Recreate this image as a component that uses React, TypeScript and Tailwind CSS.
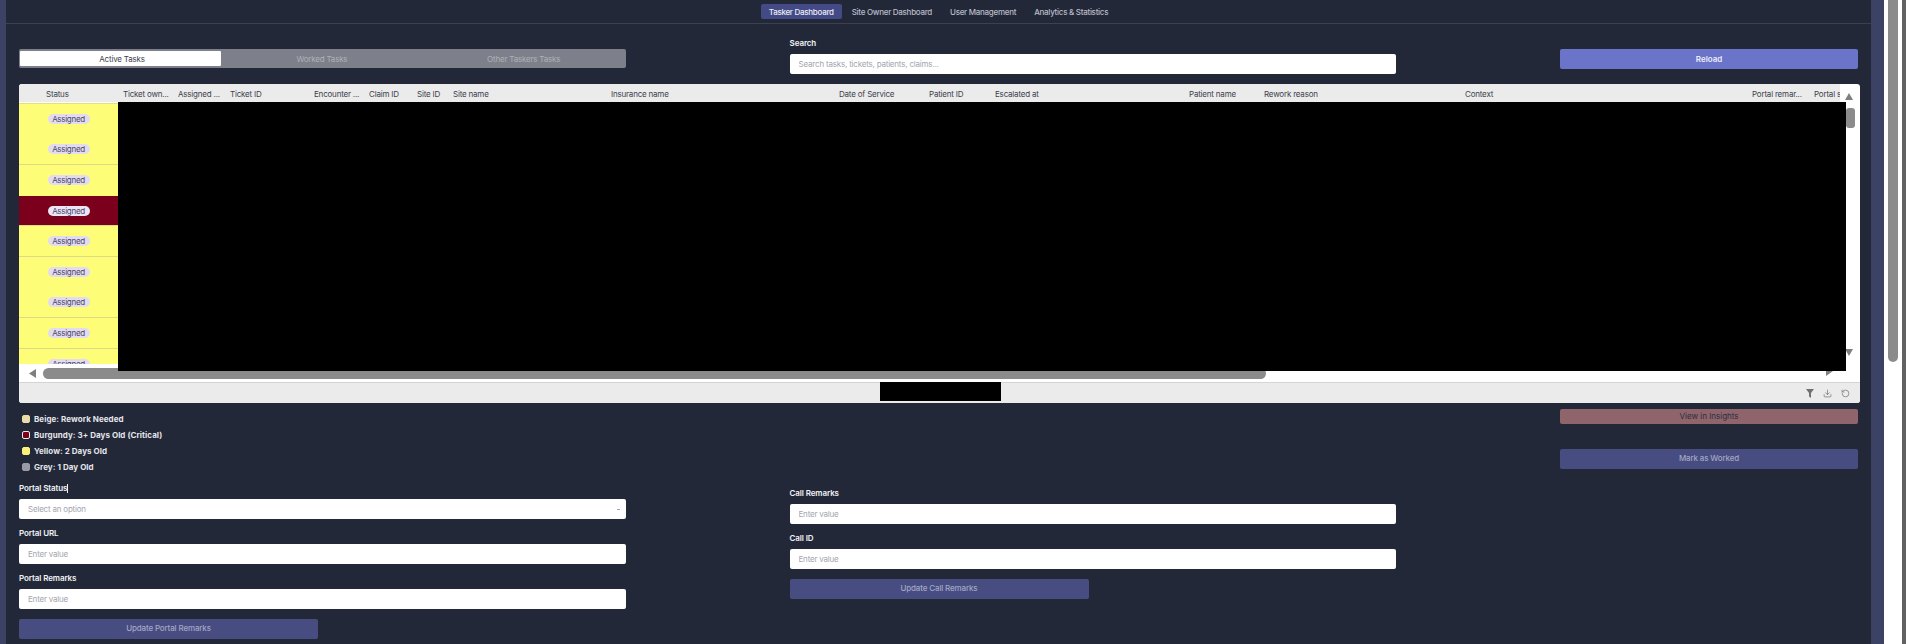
import { Download, RotateCcw } from 'lucide-react';

const navItems = ['Tasker Dashboard', 'Site Owner Dashboard', 'User Management', 'Analytics & Statistics'];

const columns = [
  'Ticket own...',
  'Assigned ...',
  'Ticket ID',
  'Encounter ...',
  'Claim ID',
  'Site ID',
  'Site name',
  'Insurance name',
  'Date of Service',
  'Patient ID',
  'Escalated at',
  'Patient name',
  'Rework reason',
  'Context',
  'Portal remar...',
  'Portal status',
];

// bottom line on a row, burgundy is the overdue one
const rows = [
  { line: false, critical: false },
  { line: true, critical: false },
  { line: false, critical: false },
  { line: true, critical: true },
  { line: true, critical: false },
  { line: false, critical: false },
  { line: true, critical: false },
  { line: true, critical: false },
  { line: false, critical: false },
];

const legend = [
  { label: 'Beige: Rework Needed', color: 'bg-[#e9dca6] border-[#e9dca6]' },
  { label: 'Burgundy: 3+ Days Old (Critical)', color: 'bg-[#7a001c] border-[#f0e8e8]' },
  { label: 'Yellow: 2 Days Old', color: 'bg-[#fdf07a] border-[#fdf07a]' },
  { label: 'Grey: 1 Day Old', color: 'bg-[#9a9aa6] border-[#9a9aa6]' },
];

function Field({ label, last }: { label: string; last?: boolean }) {
  return (
    <div className={last ? 'flex flex-col' : 'mb-[9px] flex flex-col'}>
      <label className="mb-[6px] h-[10px] text-[8px] leading-[10px] font-semibold tracking-[-0.1px] text-[#f2f3f7]">
        {label}
      </label>
      <input
        readOnly
        placeholder="Enter value"
        className="h-[20px] w-full rounded-[2px] bg-white px-[9px] text-[8px] tracking-[-0.2px] text-[#3a3f50] outline-none placeholder:text-[#a3a5ad]"
      />
    </div>
  );
}

function DimButton({ label, className }: { label: string; className: string }) {
  return (
    <button
      className={`flex h-[20px] items-center justify-center rounded-[2px] bg-[#474d80] pb-[3px] text-[8px] font-medium tracking-[-0.15px] text-[#a3a6c6] ${className}`}
    >
      {label}
    </button>
  );
}

function StatusTable() {
  return (
    <div className="relative flex h-[319px] w-[1841px] flex-col overflow-hidden rounded-[3px] bg-white">
      <div className="flex h-[19px] w-full">
        <div className="grid h-[18px] w-[1821px] shrink-0 grid-cols-[99px_55px_52px_84px_55px_48px_36px_158px_228px_90px_66px_194px_75px_201px_287px_62px_31px] items-center overflow-hidden bg-[#ebebeb] pt-[1px] text-[8px] tracking-[-0.2px] text-[#3b3f4c]">
          <div className="pl-[27px]">Status</div>
          {columns.map((c) => (
            <div key={c} className="overflow-hidden pl-[5px] whitespace-nowrap">
              {c}
            </div>
          ))}
        </div>
      </div>

      <div className="h-[261px] w-[99px] overflow-hidden border-t border-[#e6dc80]">
        {rows.map((r, i) => (
          <div
            key={i}
            className={`flex h-[30.6px] items-center justify-center ${r.critical ? 'bg-[#7a001c]' : 'bg-[#fdfd78]'} ${
              r.line ? 'border-b border-[#dfd98a]' : ''
            }`}
          >
            <span
              className={`flex h-[10px] w-[42px] items-center justify-center rounded-full text-[8px] leading-[10px] tracking-[-0.3px] ${
                r.critical ? 'bg-[#ece5f6] text-[#4a4668]' : 'bg-[#e3dcf0] text-[#4a4868]'
              }`}
            >
              Assigned
            </span>
          </div>
        ))}
      </div>

      {/* horizontal scrollbar */}
      <div className="flex h-[18px] items-center pl-[10px]">
        <svg width="7" height="9" viewBox="0 0 7 9" className="mr-[7px]">
          <polygon points="7,0 7,9 0,4.5" fill="#7f7f7f" />
        </svg>
        <div className="h-[11px] w-[1223px] rounded-full bg-[#8b8b8b]" />
      </div>

      <div className="flex flex-1 items-center justify-end gap-[9px] border-t border-[#d4d4d4] bg-[#ebebeb] pr-[10px]">
        <svg width="8" height="9" viewBox="0 0 8 9">
          <polygon points="0,0 8,0 5,4 5,9 3,7.5 3,4" fill="#6f7074" />
        </svg>
        <Download size={9} color="#77787c" />
        <RotateCcw size={9} color="#77787c" />
      </div>

      {/* vertical scrollbar over the grid */}
      <svg width="8" height="7" viewBox="0 0 8 7" className="absolute top-[9px] left-[1826px]">
        <polygon points="4,0 8,7 0,7" fill="#7f7f7f" />
      </svg>
      <div className="absolute top-[24px] left-[1827px] h-[20px] w-[9px] rounded-[3px] bg-[#8b8b8b]" />
      <svg width="8" height="7" viewBox="0 0 8 7" className="absolute top-[265px] left-[1826px]">
        <polygon points="0,0 8,0 4,7" fill="#7f7f7f" />
      </svg>
      <svg width="7" height="5" viewBox="0 0 7 5" className="absolute top-[287px] left-[1807px]">
        <polygon points="0,0 7,0 0,5" fill="#7f7f7f" />
      </svg>

      {/* redacted data */}
      <div className="absolute top-[18px] left-[99px] h-[269px] w-[1728px] bg-black" />
      <div className="absolute top-[298px] left-[861px] h-[19px] w-[121px] bg-black" />
    </div>
  );
}

export default function App() {
  return (
    <div className="flex h-[644px] w-[1906px] overflow-hidden bg-[#232838] font-['Inter',sans-serif]">
      <div className="w-[6px] bg-[#3c4263]" />

      <main className="flex w-[1865px] flex-col">
        <nav className="flex h-[24px] items-start justify-center gap-[2px] border-b border-[#3b4052] pt-[4px] text-[8px] font-medium tracking-[-0.28px] text-[#b9bcc8]">
          {navItems.map((item, i) => (
            <a
              key={item}
              className={`flex h-[15px] items-center rounded-[2px] px-[8px] ${
                i === 0 ? 'bg-[#434a85] text-[#eceef6]' : ''
              }`}
            >
              {item}
            </a>
          ))}
        </nav>

        <div className="flex flex-col px-[13px]">
          <div className="flex h-[60px] gap-[164px]">
            <div className="mt-[25px] flex h-[19px] w-[607px] items-center rounded-[2px] bg-[#7d808a] p-[1px] text-[8px] tracking-[-0.2px] text-[#aeb0b7]">
              <div className="flex h-[15px] w-[201px] shrink-0 items-center justify-center rounded-[1px] bg-white pl-[3px] text-[#3b3f4c]">
                Active Tasks
              </div>
              <div className="flex flex-1 items-center justify-center">Worked Tasks</div>
              <div className="flex flex-1 items-center justify-center">Other Taskers Tasks</div>
            </div>

            <div className="mt-[14px] flex w-[607px] flex-col">
              <label className="mb-[6px] h-[10px] text-[8px] leading-[10px] font-semibold tracking-[-0.1px] text-[#f2f3f7]">
                Search
              </label>
              <input
                readOnly
                placeholder="Search tasks, tickets, patients, claims..."
                className="h-[20px] w-full rounded-[2px] bg-white px-[9px] text-[8px] tracking-[-0.2px] outline-none placeholder:text-[#a3a5ad]"
              />
            </div>

            <button className="mt-[25px] flex h-[20px] w-[298px] items-center justify-center rounded-[2px] bg-[#6a74c9] pb-[1px] text-[8px] font-semibold text-[#eceef8]">
              Reload
            </button>
          </div>

          <StatusTable />

          <div className="flex gap-[164px]">
            <div className="flex w-[607px] flex-col">
              <div className="mt-[11px] mb-[11px] flex flex-col gap-[6px] pl-[3px]">
                {legend.map((l) => (
                  <div
                    key={l.label}
                    className="flex h-[10px] items-center gap-[4px] text-[8px] font-bold tracking-[0.06px] text-[#e4e5ea]"
                  >
                    <span className={`h-[8px] w-[8px] rounded-[2px] border ${l.color}`} />
                    {l.label}
                  </div>
                ))}
              </div>

              <div className="mb-[9px] flex flex-col">
                <label className="mb-[6px] flex h-[10px] items-center text-[8px] leading-[10px] font-semibold tracking-[-0.1px] text-[#f2f3f7]">
                  Portal Status
                  <span className="h-[9px] w-px bg-[#f2f3f7]" />
                </label>
                <div className="flex h-[20px] items-center justify-between rounded-[2px] bg-white px-[9px] pr-[6px] text-[8px] tracking-[-0.2px] text-[#a3a5ad]">
                  <span>Select an option</span>
                  <span className="h-px w-[3px] bg-[#a3a5ad]" />
                </div>
              </div>
              <Field label="Portal URL" />
              <Field label="Portal Remarks" />
              <DimButton label="Update Portal Remarks" className="mt-[1px] w-[299px]" />
            </div>

            <div className="flex w-[607px] flex-col pt-[85px]">
              <Field label="Call Remarks" />
              <Field label="Call ID" />
              <DimButton label="Update Call Remarks" className="mt-[1px] w-[299px]" />
            </div>

            <div className="flex w-[298px] flex-col pt-[6px]">
              <button className="flex h-[15px] items-center justify-center rounded-[2px] bg-[#8f656b] pb-[2px] text-[8px] text-[#2a2e3e]">
                View in Insights
              </button>
              <DimButton label="Mark as Worked" className="mt-[25px] w-[298px]" />
            </div>
          </div>
        </div>
      </main>

      <div className="w-[13px] bg-[#3c4263]" />

      {/* page scrollbar */}
      <div className="flex w-[22px]">
        <div className="flex w-[18px] bg-white px-[4px]">
          <div className="h-[362px] w-[11px] rounded-b-[5px] bg-[#8b8b8b]" />
        </div>
        <div className="w-[4px] bg-[#626262]" />
      </div>
    </div>
  );
}
